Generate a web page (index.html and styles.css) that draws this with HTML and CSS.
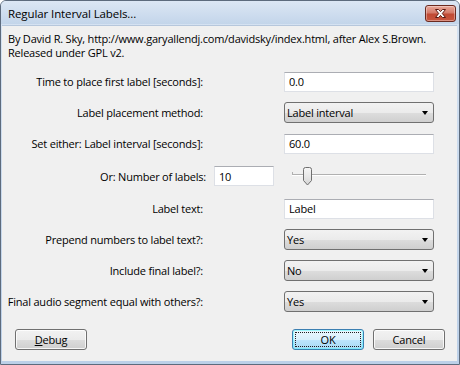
FILE: index.html
```html
<!DOCTYPE html>
<html>
<head>
<meta charset="utf-8">
<link rel="stylesheet" href="styles.css">
</head>
<body>
<div class="window">
  <div class="titlebar">
    <span class="title">Regular Interval Labels...</span>
    <div class="close">
      <svg width="15" height="11" viewBox="0 0 15 11">
        <path d="M2.5 1.5 L5.5 1.5 L7.5 3.6 L9.5 1.5 L12.5 1.5 L9.3 5.5 L12.5 9.5 L9.5 9.5 L7.5 7.4 L5.5 9.5 L2.5 9.5 L5.7 5.5 Z" fill="#fff" stroke="#5a1a12" stroke-width="1" stroke-linejoin="round"/>
      </svg>
    </div>
  </div>
  <div class="client">
    <div class="desc">By David R. Sky, http://www.garyallendj.com/davidsky/index.html, after Alex S.Brown.<br>Released under GPL v2.</div>
    <div class="form">
      <div class="row">
        <div class="label">Time to place first label [seconds]:</div>
        <div class="input">0.0</div>
      </div>
      <div class="row">
        <div class="label">Label placement method:</div>
        <div class="select"><span>Label interval</span><i class="arrow"></i></div>
      </div>
      <div class="row">
        <div class="label">Set either: Label interval [seconds]:</div>
        <div class="input">60.0</div>
      </div>
      <div class="row row-num">
        <div class="label label-num">Or: Number of labels:</div>
        <div class="input input-num">10</div>
        <div class="slider">
          <div class="track"></div>
          <svg class="thumb" width="11" height="19" viewBox="0 0 11 19">
            <defs>
              <linearGradient id="tg" x1="0" y1="0" x2="0" y2="1">
                <stop offset="0" stop-color="#f6f6f6"/>
                <stop offset="0.5" stop-color="#e8e8e8"/>
                <stop offset="1" stop-color="#d4d4d4"/>
              </linearGradient>
            </defs>
            <path d="M1.5 2.5 Q1.5 0.5 3.5 0.5 L7.5 0.5 Q9.5 0.5 9.5 2.5 L9.5 13.5 L5.5 18 L1.5 13.5 Z" fill="url(#tg)" stroke="#6f6f6f" stroke-width="1"/>
          </svg>
        </div>
      </div>
      <div class="row">
        <div class="label">Label text:</div>
        <div class="input">Label</div>
      </div>
      <div class="row">
        <div class="label">Prepend numbers to label text?:</div>
        <div class="select"><span>Yes</span><i class="arrow"></i></div>
      </div>
      <div class="row">
        <div class="label">Include final label?:</div>
        <div class="select"><span>No</span><i class="arrow"></i></div>
      </div>
      <div class="row">
        <div class="label">Final audio segment equal with others?:</div>
        <div class="select"><span>Yes</span><i class="arrow"></i></div>
      </div>
    </div>
    <div class="buttons">
      <div class="btn"><span><u>D</u>ebug</span></div>
      <div class="spacer"></div>
      <div class="btn btn-default"><span class="focus">OK</span></div>
      <div class="btn"><span>Cancel</span></div>
    </div>
  </div>
</div>
</body>
</html>
```

FILE: styles.css
```css
html, body {
  margin: 0;
  padding: 0;
  background: #ffffff;
}
body {
  font-family: "Open Sans", "Noto Sans", sans-serif;
  font-size: 11px;
  letter-spacing: -0.2px;
  color: #000;
}
.window {
  width: 460px;
  height: 365px;
  box-sizing: border-box;
  border: 1px solid #5d6b7d;
  border-radius: 6px 6px 0 0;
  background: linear-gradient(#d6e3f2, #bcd0e8);
  display: flex;
  flex-direction: column;
  overflow: hidden;
}
.titlebar {
  height: 23px;
  flex: none;
  display: flex;
  align-items: center;
  padding-left: 7px;
  position: relative;
  background: linear-gradient(#dce7f4, #c3d5ea);
}
.title {
  font-size: 11.5px;
  letter-spacing: -0.1px;
  color: #000;
  margin-top: 2px;
}
.close {
  position: absolute;
  right: 3px;
  top: 4px;
  width: 29px;
  height: 15px;
  border: 1px solid #6b2a20;
  border-radius: 3px;
  background: linear-gradient(#e9a99b 0%, #d47b6a 45%, #c04a34 55%, #c9563f 100%);
  display: flex;
  align-items: center;
  justify-content: center;
  box-shadow: inset 0 0 0 1px rgba(255,255,255,0.35);
}
.client {
  flex: 1;
  margin: 1px 2px 3px 1px;
  background: #f0f0f0;
  display: flex;
  flex-direction: column;
  border-top: 1px solid #b6c7dc;
}
.desc {
  padding: 6px 0 0 6px;
  line-height: 14px;
}
.form {
  display: flex;
  flex-direction: column;
  gap: 10px;
  margin-top: 11px;
}
.row {
  display: flex;
  align-items: center;
  height: 21px;
}
.row-num {
  height: 24px;
}
.label {
  width: 201px;
  text-align: right;
  flex: none;
  white-space: nowrap;
}
.label-num {
  width: 204px;
}
.input {
  margin-left: 81px;
  width: 150px;
  height: 20px;
  box-sizing: border-box;
  background: #fff;
  border: 1px solid #dde0e6;
  border-top-color: #abadb3;
  padding-left: 4px;
  display: flex;
  align-items: center;
}
.input-num {
  margin-left: 8px;
  width: 60px;
}
.select {
  margin-left: 81px;
  width: 150px;
  height: 21px;
  box-sizing: border-box;
  border: 1px solid #707070;
  border-radius: 3px;
  background: linear-gradient(#f2f2f2 0%, #ebebeb 50%, #dddddd 51%, #cfcfcf 100%);
  padding-left: 2px;
  display: flex;
  align-items: center;
  justify-content: space-between;
  padding-right: 5px;
}
.arrow {
  width: 0;
  height: 0;
  border-left: 3.5px solid transparent;
  border-right: 3.5px solid transparent;
  border-top: 4px solid #000;
}
.slider {
  margin-left: 18px;
  width: 134px;
  height: 19px;
  position: relative;
}
.track {
  position: absolute;
  left: 0;
  right: 0;
  top: 7px;
  height: 1px;
  background: #b0b0b0;
  border-bottom: 1px solid #fff;
}
.track::before {
  content: "";
  position: absolute;
  left: 0;
  top: -2px;
  width: 1px;
  height: 3px;
  background: #b0b0b0;
}
.thumb {
  position: absolute;
  left: 10px;
  top: 0;
}
.buttons {
  display: flex;
  margin-top: 17px;
  padding: 0 12px 0 13px;
  gap: 9px;
}
.spacer {
  flex: 1;
}
.btn {
  width: 72px;
  height: 21px;
  box-sizing: border-box;
  border: 1px solid #707070;
  border-radius: 3px;
  background: linear-gradient(#f2f2f2 0%, #ebebeb 50%, #dddddd 51%, #cfcfcf 100%);
  box-shadow: inset 0 0 0 1px rgba(255,255,255,0.8);
  display: flex;
  align-items: center;
  justify-content: center;
}
.btn-default {
  border-color: #3c7fb1;
  background: linear-gradient(#eaf6fd 0%, #d9f0fc 50%, #bee6fd 51%, #a7d9f5 100%);
  box-shadow: inset 0 0 0 1px rgba(72,252,255,0.45);
}
.focus {
  box-sizing: border-box;
  width: 66px;
  height: 15px;
  border: 1px dotted #1f1f1f;
  display: flex;
  align-items: center;
  justify-content: center;
}
```
